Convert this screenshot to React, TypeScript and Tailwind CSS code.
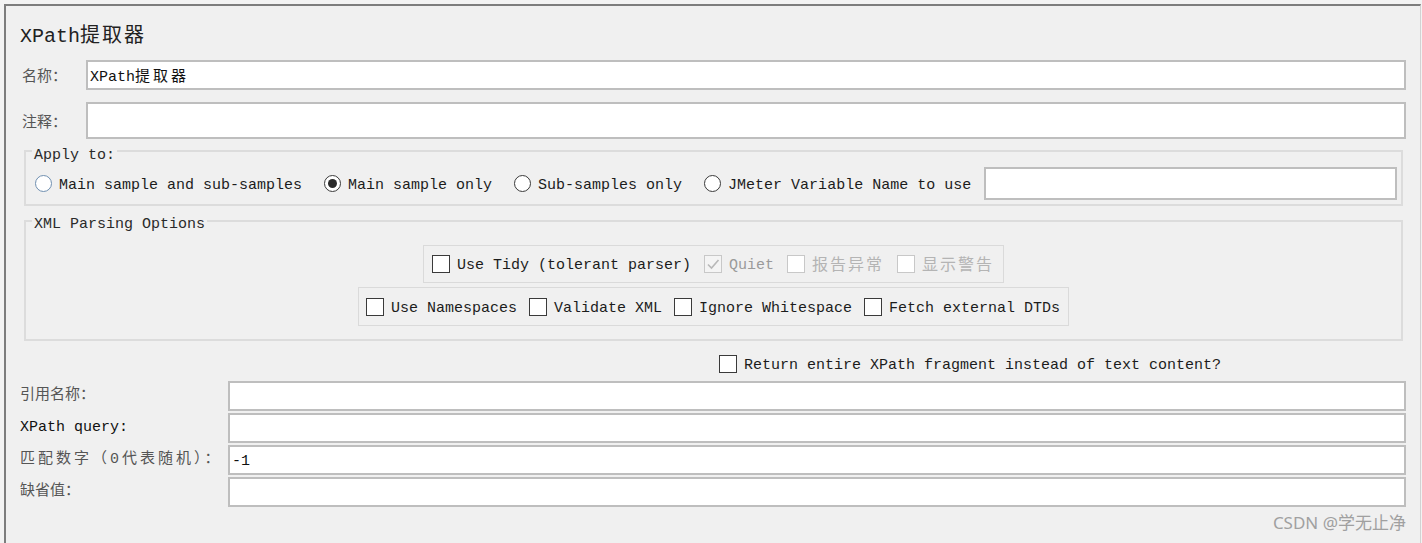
import React from 'react';

const mono = "font-['Liberation_Mono','Noto_Sans_CJK_SC',monospace]";

function Radio({ checked, focus, label }: { checked?: boolean; focus?: boolean; label: string }) {
  return (
    <div className="flex items-center gap-[7px]">
      <span
        className={`flex h-[17px] w-[17px] items-center justify-center rounded-full border bg-white ${
          focus ? 'border-[#6f8fb0]' : 'border-[#3a3a3a]'
        }`}
      >
        {checked && <span className="h-[9px] w-[9px] rounded-full bg-[#2a2a2a]" />}
      </span>
      <span className="whitespace-pre pt-[4px] text-[#1c1c1c]">{label}</span>
    </div>
  );
}

function Check({ label, disabled, checked, cjk }: { label: string; disabled?: boolean; checked?: boolean; cjk?: boolean }) {
  return (
    <div className="flex items-center gap-[7px]">
      <span
        className={`flex h-[18px] w-[18px] items-center justify-center border ${
          disabled ? 'border-[#c8c8c8]' : 'border-[#3a3a3a]'
        } ${disabled && checked ? 'bg-[#f4f4f4]' : 'bg-white'}`}
      >
        {checked && (
          <svg width="14" height="14" viewBox="0 0 14 14">
            <path d="M2 7.5 L5.5 11 L12.5 3" fill="none" stroke="#b8b8b8" strokeWidth="1.6" />
          </svg>
        )}
      </span>
      <span
        className={`whitespace-pre pt-[4px] ${
          cjk ? 'text-[16px] tracking-[2px] text-[#b4b4b4]' : disabled ? 'text-[#9a9a9a]' : 'text-[#1c1c1c]'
        }`}
      >
        {label}
      </span>
    </div>
  );
}

function Field({ h, children }: { h: string; children?: React.ReactNode }) {
  return (
    <div className={`flex flex-1 items-center border-2 border-[#bebebe] bg-white px-[2px] ${h}`}>{children}</div>
  );
}

const bottomRows = [
  { label: '引用名称：', value: '' },
  { label: 'XPath query:', value: '', dark: true },
  { label: '匹配数字（0代表随机）：', value: '-1', wide: true },
  { label: '缺省值：', value: '' },
];

export default function App() {
  return (
    <div className={`h-[543px] w-[1422px] overflow-hidden bg-[#f3f3f3] pl-[4px] pt-[4px] text-[15px] leading-[18px] ${mono}`}>
      <div className="h-[545px] w-[1417px] border-l-2 border-r border-t-2 border-l-[#7d7d7d] border-r-[#d2d2d2] border-t-[#7d7d7d] bg-[#f0f0f0]">
        {/* Title */}
        <div className="h-[54px] pl-[14px] pt-[19px] text-[20px] leading-[24px] text-[#222]">
          XPath<span className="tracking-[2px]">提取器</span>
        </div>

        {/* Name / comment */}
        <div className="mr-[14px] flex items-center pl-[16px]">
          <span className="w-[64px] pt-[6px] text-[#555]">名称：</span>
          <Field h="h-[30px]">
            <span className="pt-[5px] text-[#111]">
              XPath<span className="tracking-[3px]">提取器</span>
            </span>
          </Field>
        </div>
        <div className="mr-[14px] mt-[12px] flex items-center pl-[16px]">
          <span className="w-[64px] pt-[6px] text-[#555]">注释：</span>
          <Field h="h-[37px]" />
        </div>

        {/* Apply to */}
        <div className="relative ml-[18px] mr-[17px] mt-[11px] border-2 border-[#dcdcdc] pb-[4px] pl-[9px] pr-[4px] pt-[15px]">
          <span className="absolute left-[6px] top-[-5px] bg-[#f0f0f0] px-[2px] text-[#2a2a2a]">Apply to:</span>
          <div className="flex h-[33px] items-center">
            <Radio focus label="Main sample and sub-samples" />
            <div className="ml-[22px]">
              <Radio checked label="Main sample only" />
            </div>
            <div className="ml-[22px]">
              <Radio label="Sub-samples only" />
            </div>
            <div className="ml-[22px]">
              <Radio label="JMeter Variable Name to use" />
            </div>
            <div className="ml-[13px] flex h-[33px] flex-1">
              <Field h="h-[33px]" />
            </div>
          </div>
        </div>

        {/* XML Parsing Options */}
        <div className="relative ml-[18px] mr-[17px] mt-[14px] flex flex-col items-center gap-[4px] border-2 border-[#dcdcdc] pb-[13px] pt-[23px]">
          <span className="absolute left-[6px] top-[-6px] bg-[#f0f0f0] px-[2px] text-[#2a2a2a]">XML Parsing Options</span>
          <div className="flex h-[38px] items-center gap-[13px] border border-[#dadada] pl-[8px] pr-[9px]">
            <Check label="Use Tidy (tolerant parser)" />
            <Check label="Quiet" disabled checked />
            <Check label="报告异常" disabled cjk />
            <Check label="显示警告" disabled cjk />
          </div>
          <div className="flex h-[39px] items-center gap-[12px] border border-[#dadada] pl-[7px] pr-[8px]">
            <Check label="Use Namespaces" />
            <Check label="Validate XML" />
            <Check label="Ignore Whitespace" />
            <Check label="Fetch external DTDs" />
          </div>
        </div>

        {/* Return fragment */}
        <div className="ml-[713px] mt-[11px] flex h-[24px] items-center">
          <Check label="Return entire XPath fragment instead of text content?" />
        </div>

        {/* Bottom fields */}
        <div className="mr-[14px] mt-[5px] flex flex-col gap-[2px]">
          {bottomRows.map((r) => (
            <div key={r.label} className="flex items-center">
              <span
                className={`w-[222px] whitespace-pre pl-[14px] ${r.dark ? 'text-[#111]' : 'text-[#555]'} ${
                  r.wide ? 'tracking-[3px]' : ''
                }`}
              >
                {r.label}
              </span>
              <Field h="h-[30px]">
                <span className="pt-[4px] text-[#111]">{r.value}</span>
              </Field>
            </div>
          ))}
        </div>

        <div className="mr-[14px] mt-[4px] text-right font-['Noto_Sans','Noto_Sans_CJK_SC',sans-serif] text-[17px] leading-[24px] text-[#a0a0a0]">
          CSDN @学无止净
        </div>
      </div>
    </div>
  );
}
